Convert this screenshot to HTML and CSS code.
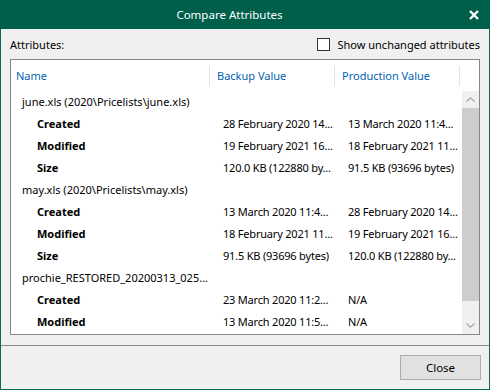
FILE: index.html
```html
<!DOCTYPE html>
<html lang="en">
<head>
  <meta charset="UTF-8">
  <title>Compare Attributes</title>
  <link rel="stylesheet" href="styles.css">
</head>
<body>
  <div class="window">
    <!-- Title bar -->
    <div class="titlebar">
      <span class="title">Compare Attributes</span>
      <svg class="close-x" width="10" height="10" viewBox="0 0 10 10">
        <path d="M1 1 L9 9 M9 1 L1 9" stroke="#fff" stroke-width="2.4" fill="none"/>
      </svg>
    </div>

    <!-- Toolbar -->
    <div class="toolbar">
      <span>Attributes:</span>
      <label class="check">
        <span class="box"></span>
        <span>Show unchanged attributes</span>
      </label>
    </div>

    <!-- List -->
    <div class="list">
      <div class="list-head">
        <div class="hcell c-name">Name</div>
        <div class="hcell c-val">Backup Value</div>
        <div class="hcell c-val">Production Value</div>
        <div class="hcell"></div>
      </div>
      <div class="list-body">
        <div class="rows">
          <div class="row parent"><div class="cell">june.xls (2020\Pricelists\june.xls)</div></div>
          <div class="row"><div class="cell key">Created</div><div class="cell val">28 February 2020 14...</div><div class="cell val">13 March 2020 11:4...</div></div>
          <div class="row"><div class="cell key">Modified</div><div class="cell val">19 February 2021 16...</div><div class="cell val">18 February 2021 11...</div></div>
          <div class="row"><div class="cell key">Size</div><div class="cell val">120.0 KB (122880 by...</div><div class="cell val">91.5 KB (93696 bytes)</div></div>
          <div class="row parent"><div class="cell">may.xls (2020\Pricelists\may.xls)</div></div>
          <div class="row"><div class="cell key">Created</div><div class="cell val">13 March 2020 11:4...</div><div class="cell val">28 February 2020 14...</div></div>
          <div class="row"><div class="cell key">Modified</div><div class="cell val">18 February 2021 11...</div><div class="cell val">19 February 2021 16...</div></div>
          <div class="row"><div class="cell key">Size</div><div class="cell val">91.5 KB (93696 bytes)</div><div class="cell val">120.0 KB (122880 by...</div></div>
          <div class="row parent"><div class="cell">prochie_RESTORED_20200313_025...</div></div>
          <div class="row"><div class="cell key">Created</div><div class="cell val">23 March 2020 11:2...</div><div class="cell val">N/A</div></div>
          <div class="row"><div class="cell key">Modified</div><div class="cell val">13 March 2020 11:5...</div><div class="cell val">N/A</div></div>
        </div>
        <div class="scrollbar">
          <div class="sb-btn">
            <svg width="9" height="5" viewBox="0 0 9 5"><path d="M0.5 4.5 L4.5 0.8 L8.5 4.5" stroke="#a6a6a6" stroke-width="1.2" fill="none"/></svg>
          </div>
          <div class="sb-thumb"></div>
          <div class="sb-track"></div>
          <div class="sb-btn">
            <svg width="9" height="5" viewBox="0 0 9 5"><path d="M0.5 0.5 L4.5 4.2 L8.5 0.5" stroke="#a6a6a6" stroke-width="1.2" fill="none"/></svg>
          </div>
        </div>
      </div>
    </div>

    <!-- Footer -->
    <div class="footer">
      <button class="btn">Close</button>
    </div>
  </div>
</body>
</html>
```

FILE: styles.css
```css
/* Global */
* {
  margin: 0;
  padding: 0;
  box-sizing: border-box;
}

body {
  font-family: "Noto Sans", "Open Sans", sans-serif;
  font-size: 11px;
  color: #000;
  background: #f0f0f0;
}

/* Window */
.window {
  width: 490px;
  height: 390px;
  border: 1px solid #0b6a54;
  border-top: none;
  background: #f0f0f0;
  display: flex;
  flex-direction: column;
}

.titlebar {
  height: 29px;
  margin: 0 -1px;
  background: #005f4b;
  color: #fff;
  display: flex;
  align-items: center;
  justify-content: center;
  position: relative;
}

.titlebar .title {
  font-size: 11.5px;
  padding-right: 31px;
}

.titlebar .close-x {
  position: absolute;
  right: 11px;
  top: 10px;
}

/* Toolbar */
.toolbar {
  height: 30px;
  padding: 0 9px;
  display: flex;
  align-items: center;
  justify-content: space-between;
}

.check {
  display: flex;
  align-items: center;
  gap: 7px;
}

.check .box {
  width: 13px;
  height: 13px;
  border: 1px solid #333;
  background: #fff;
}

/* List */
.list {
  margin: 0 9px;
  height: 276px;
  border: 1px solid #828790;
  background: #fff;
  display: flex;
  flex-direction: column;
}

.list-head {
  height: 31px;
  display: grid;
  grid-template-columns: 199px 125px 125px 1fr;
  color: #0063b1;
}

.hcell {
  display: flex;
  align-items: center;
  padding-left: 5px;
  padding-bottom: 1px;
  background: linear-gradient(#e3e3e3, #e3e3e3) right center / 1px 20px no-repeat;
}

.hcell.c-val {
  padding-left: 7px;
}

.hcell:last-child {
  background: none;
}

.list-body {
  flex: 1;
  display: flex;
  min-height: 0;
}

.rows {
  flex: 1;
  overflow: hidden;
}

.row {
  height: 22px;
  padding-bottom: 2px;
  display: grid;
  grid-template-columns: 199px 125px 125px;
  align-items: center;
}

.cell {
  white-space: nowrap;
  overflow: hidden;
  text-overflow: ellipsis;
}

.row.parent .cell {
  padding-left: 11px;
}

.cell.key {
  font-weight: bold;
  padding-left: 26px;
}

.cell.val {
  padding-left: 13px;
  overflow: visible;
  letter-spacing: -0.2px;
}

/* Scrollbar */
.scrollbar {
  width: 17px;
  background: #f0f0f0;
  display: flex;
  flex-direction: column;
}

.sb-btn {
  height: 17px;
  display: flex;
  align-items: center;
  justify-content: center;
}

.sb-thumb {
  height: 193px;
  background: #cdcdcd;
}

.sb-track {
  flex: 1;
}

/* Footer */
.footer {
  margin-top: 10px;
  border-top: 1px solid #8c8c8c;
  flex: 1;
  display: flex;
  justify-content: flex-end;
  padding: 9px 8px 0 0;
}

.btn {
  width: 81px;
  height: 25px;
  font-family: inherit;
  font-size: 11.5px;
  background: #e1e1e1;
  border: 1px solid #adadad;
  color: #000;
}
```
